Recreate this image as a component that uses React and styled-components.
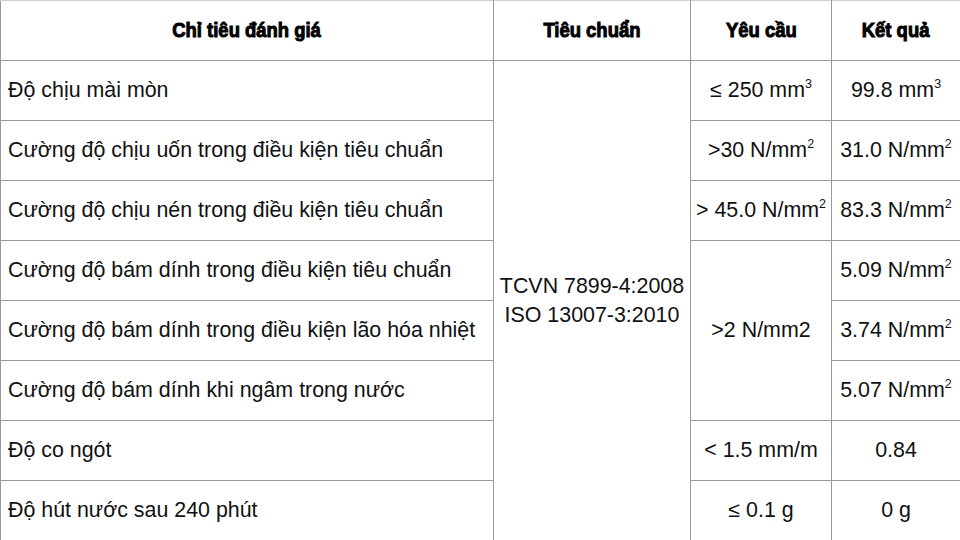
import React from 'react';
import styled, { createGlobalStyle } from 'styled-components';

const GlobalStyle = createGlobalStyle`
  html, body {
    margin: 0;
    padding: 0;
    background: #ffffff;
  }
  body {
    font-family: "Liberation Sans", Arial, sans-serif;
    color: #111111;
  }
`;

const Table = styled.table`
  width: 960px;
  height: 540px;
  border-collapse: collapse;
  table-layout: fixed;
  font-family: "Liberation Sans", Arial, sans-serif;
  font-size: 21.4px;
  color: #111111;
`;

const HeadCell = styled.th`
  height: 59px;
  border: 1px solid #9a9a9a;
  border-top-color: #d0d0d0;
  text-align: center;
  vertical-align: middle;
  padding: 0;
`;

// condensed heavy heading face, squeezed from the sans bold
const HeadText = styled.span`
  display: inline-block;
  font-family: "Liberation Sans", Arial, sans-serif;
  font-weight: 700;
  font-size: 20.5px;
  color: #000000;
  transform: scaleX(0.9);
  -webkit-text-stroke: 1px #000000;
  white-space: nowrap;
`;

const Cell = styled.td`
  height: 59px;
  border: 1px solid #9a9a9a;
  padding: 0 ${p => (p.$left ? '7px' : '0')};
  text-align: ${p => (p.$left ? 'left' : 'center')};
  vertical-align: middle;
  white-space: nowrap;
  line-height: 29px;
`;

const Sup = styled.sup`
  font-size: 12.5px;
  line-height: 0;
  vertical-align: 9px;
`;

const rows = [
  { name: 'Độ chịu mài mòn', req: <>≤ 250 mm<Sup>3</Sup></>, res: <>99.8 mm<Sup>3</Sup></> },
  { name: 'Cường độ chịu uốn trong điều kiện tiêu chuẩn', req: <>&gt;30 N/mm<Sup>2</Sup></>, res: <>31.0 N/mm<Sup>2</Sup></> },
  { name: 'Cường độ chịu nén trong điều kiện tiêu chuẩn', req: <>&gt; 45.0 N/mm<Sup>2</Sup></>, res: <>83.3 N/mm<Sup>2</Sup></> },
  { name: 'Cường độ bám dính trong điều kiện tiêu chuẩn', req: '>2 N/mm2', span: 3, res: <>5.09 N/mm<Sup>2</Sup></> },
  { name: 'Cường độ bám dính trong điều kiện lão hóa nhiệt', skipReq: true, res: <>3.74 N/mm<Sup>2</Sup></> },
  { name: 'Cường độ bám dính khi ngâm trong nước', skipReq: true, res: <>5.07 N/mm<Sup>2</Sup></> },
  { name: 'Độ co ngót', req: '< 1.5 mm/m', res: '0.84' },
  { name: 'Độ hút nước sau 240 phút', req: '≤ 0.1 g', res: '0 g' },
];

const headings = ['Chỉ tiêu đánh giá', 'Tiêu chuẩn', 'Yêu cầu', 'Kết quả'];

export default function App() {
  return (
    <>
      <GlobalStyle />
      <Table>
        <colgroup>
          <col style={{ width: 493 }} />
          <col style={{ width: 197 }} />
          <col style={{ width: 141 }} />
          <col style={{ width: 129 }} />
        </colgroup>
        <thead>
          <tr>
            {headings.map(h => (
              <HeadCell key={h}>
                <HeadText>{h}</HeadText>
              </HeadCell>
            ))}
          </tr>
        </thead>
        <tbody>
          {rows.map((r, i) => (
            <tr key={i}>
              <Cell $left>{r.name}</Cell>
              {i === 0 && (
                <Cell rowSpan={rows.length}>
                  TCVN 7899-4:2008
                  <br />
                  ISO 13007-3:2010
                </Cell>
              )}
              {!r.skipReq && <Cell rowSpan={r.span || 1}>{r.req}</Cell>}
              <Cell>{r.res}</Cell>
            </tr>
          ))}
        </tbody>
      </Table>
    </>
  );
}
